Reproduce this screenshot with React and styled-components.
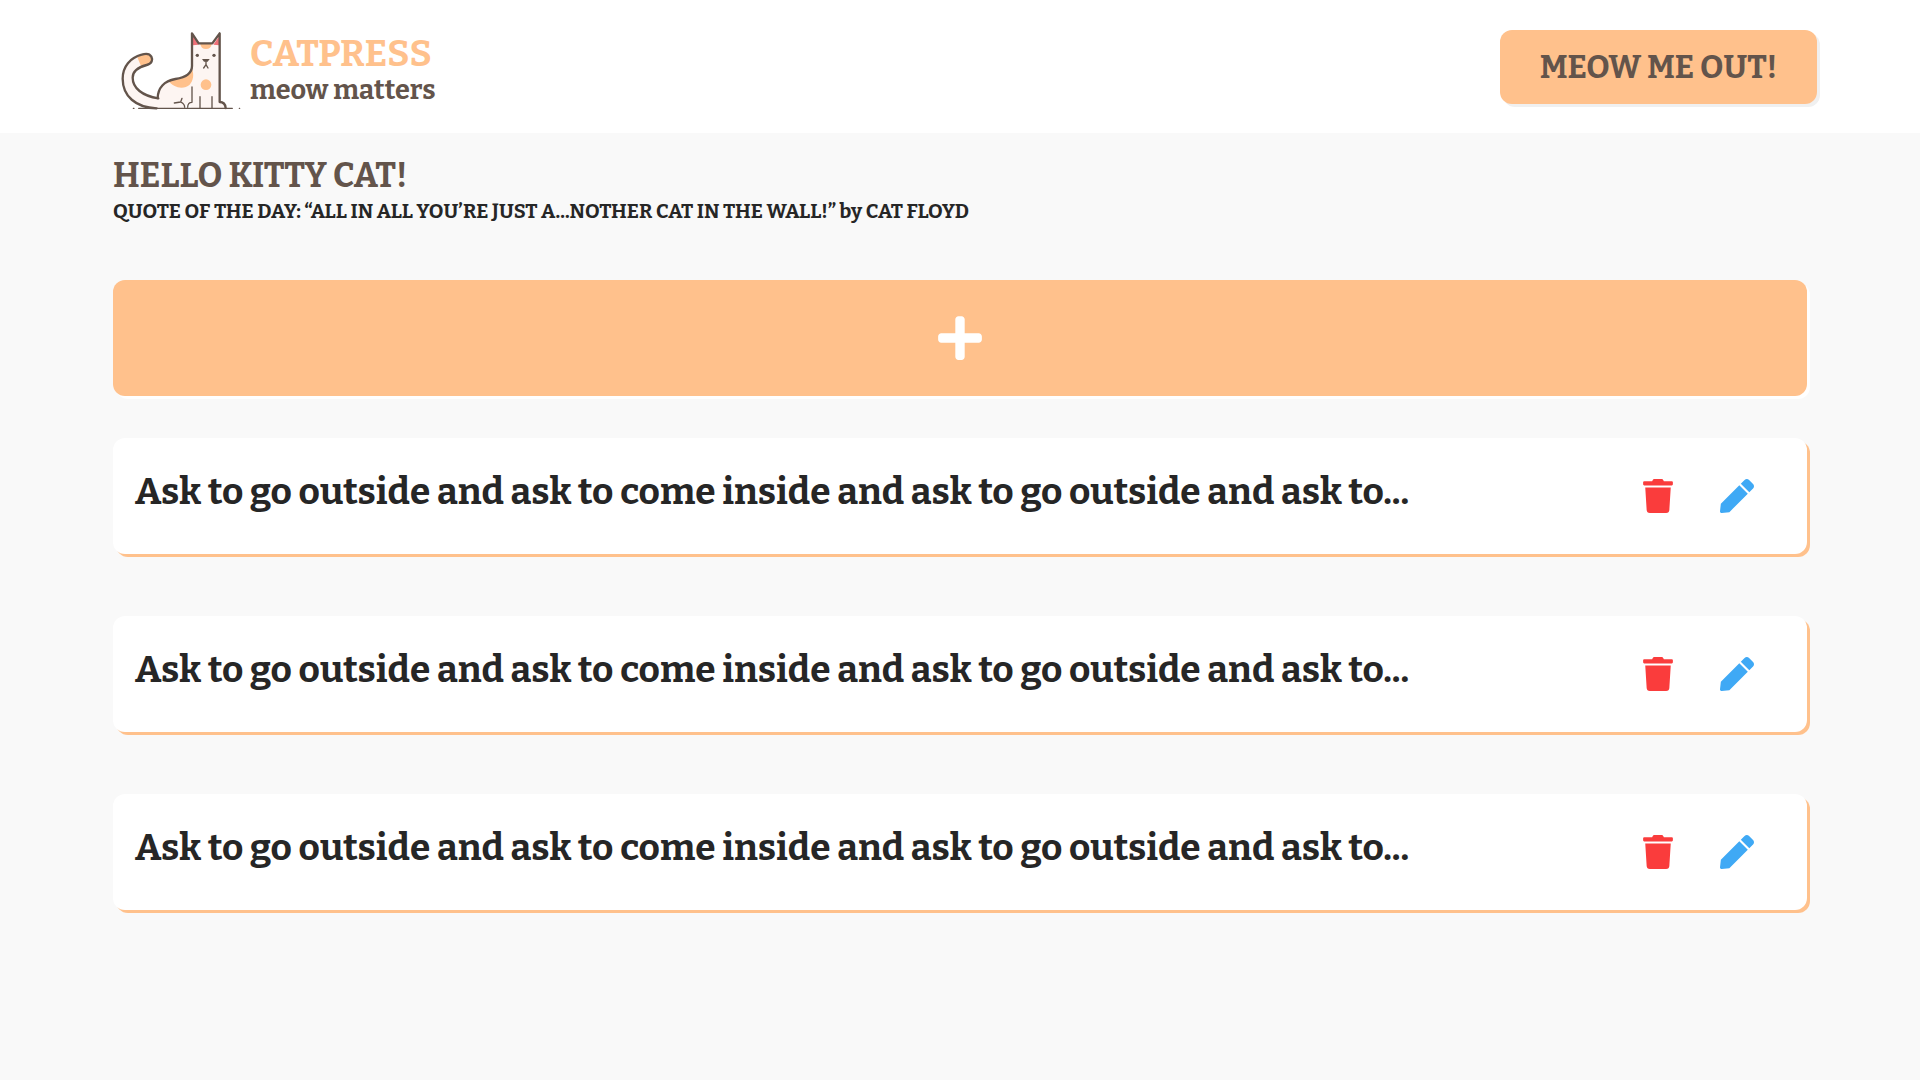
import React from 'react';
import styled, { createGlobalStyle } from 'styled-components';
import { FaPen, FaPlus, FaTrash } from 'react-icons/fa';

const peach = '#ffc18c';
const brown = '#63544b';
const ink = '#262626';

const GlobalStyle = createGlobalStyle`
  * {
    box-sizing: border-box;
    margin: 0;
    padding: 0;
  }

  body {
    background: #f9f9f9;
    color: ${ink};
    font-family: Bitter, 'DejaVu Serif', serif;
    font-weight: 700;
  }

  button {
    border: none;
    font: inherit;
    cursor: pointer;
  }
`;

const Header = styled.header`
  display: flex;
  align-items: center;
  justify-content: space-between;
  padding: 17px 103px 16px 113px;
  background: #fff;
`;

const Brand = styled.a`
  display: flex;
  align-items: center;
  color: ${brown};
  text-decoration: none;
`;

const CatLogo = styled.svg`
  display: block;
  width: 137px;
  height: 100px;
`;

const BrandText = styled.span`
  display: flex;
  flex-direction: column;
  padding-top: 6px;
`;

const BrandName = styled.span`
  color: ${peach};
  font-size: 37px;
  line-height: 40px;
`;

const Slogan = styled.span`
  font-size: 27px;
  line-height: 32px;
`;

const LogoutButton = styled.button`
  padding: 17px 40px;
  border-radius: 12px;
  background: ${peach};
  box-shadow: 3px 3px 0 #f0f0f0;
  color: ${brown};
  font-size: 32px;
  line-height: 40px;
`;

const Main = styled.main`
  padding: 23px 113px 62px;
`;

const Greeting = styled.h1`
  color: ${brown};
  font-size: 34px;
  line-height: 40px;
`;

const Quote = styled.p`
  font-size: 20px;
  line-height: 30px;
`;

const AddButton = styled.button`
  display: flex;
  align-items: center;
  justify-content: center;
  width: 100%;
  height: 116px;
  margin: 54px 0 42px;
  border-radius: 12px;
  background: ${peach};
  box-shadow: 3px 3px 0 #fff;
  color: #fff;
  font-size: 50px;
`;

const PostList = styled.ul`
  display: flex;
  flex-direction: column;
  gap: 62px;
  list-style: none;
`;

const PostCard = styled.li`
  display: flex;
  align-items: center;
  justify-content: space-between;
  height: 116px;
  padding: 0 53px 0 22px;
  border-radius: 12px;
  background: #fff;
  box-shadow: 3px 3px 0 ${peach};
`;

const PostTitle = styled.h2`
  padding-bottom: 8px;
  font-size: 37px;
  line-height: 40px;
`;

const Actions = styled.div`
  display: flex;
  gap: 45px;
`;

const IconButton = styled.button`
  display: flex;
  background: none;
  color: ${(props) => props.$color};
  font-size: 34px;

  svg {
    display: block;
    width: auto;
  }
`;

const posts = [1, 2, 3].map((id) => ({
  id,
  title: 'Ask to go outside and ask to come inside and ask to go outside and ask to...',
}));

function Cat() {
  return (
    <CatLogo viewBox="9 -9 411 300" fill="none" aria-hidden="true">
      <path
        d="M143 235C95 226 68 203 68 173C68 153 83 142 110 135C126 131 129 119 124 110C119 101 108 100 95 104C61 113 38 139 38 176C38 228 77 265 140 265H223L233 250L246 265H346C346 253 340 247 329 246V40L306 70H266L246 40V148C244 168 222 172 199 175C164 179 144 205 143 235Z"
        fill="#fdf5f2"
      />
      <path d="M95 104C108 100 119 101 124 110C129 119 126 131 110 135L94 140L82 112Z" fill={peach} />
      <path d="M174 181C188 174 207 176 222 171C237 166 244 157 247 148C252 165 250 183 239 194C223 209 191 206 174 181Z" fill={peach} />
      <path d="M271 71H305C304 82 298 87 288 87C278 87 272 81 271 71Z" fill={peach} />
      <circle cx="288" cy="194" r="16" fill={peach} />
      <path d="M248 48L266 74L248 76Z" fill="#ef7078" />
      <path d="M328 48V76L310 74Z" fill="#ef7078" />
      <g stroke={brown} strokeLinecap="round" strokeLinejoin="round">
        <path
          d="M145 235C97 228 68 204 68 173C68 153 83 142 110 135C126 131 129 119 124 110C119 101 108 100 95 104C61 113 38 139 38 176C38 228 77 263 140 265"
          strokeWidth="7"
        />
        <path d="M143 234C144 205 162 183 196 177C222 173 246 165 246 138V40L266 70H307L329 40V246C341 246 346 253 347 264" strokeWidth="7" />
        <path d="M86 265H367M70 265H72M388 265H389" strokeWidth="4" />
        <path d="M246 201V247C238 247 233 252 233 262M193 249L212 246L216 235M212 246C221 250 224 254 224 262M270 230V264M306 230V264" strokeWidth="4" />
        <path d="M288 123V134L281 144M288 134L294 144" strokeWidth="4" />
      </g>
      <path d="M276 117H299L293 125H282Z" fill={brown} />
      <circle cx="262" cy="106" r="5" fill={brown} />
      <circle cx="312" cy="106" r="5" fill={brown} />
    </CatLogo>
  );
}

export default function App() {
  return (
    <>
      <GlobalStyle />
      <Header>
        <Brand href="#">
          <Cat />
          <BrandText>
            <BrandName>CATPRESS</BrandName>
            <Slogan>meow matters</Slogan>
          </BrandText>
        </Brand>
        <LogoutButton type="button">MEOW ME OUT!</LogoutButton>
      </Header>
      <Main>
        <Greeting>HELLO KITTY CAT!</Greeting>
        <Quote>QUOTE OF THE DAY: “ALL IN ALL YOU’RE JUST A...NOTHER CAT IN THE WALL!” by CAT FLOYD</Quote>
        <AddButton type="button" aria-label="Add post">
          <FaPlus />
        </AddButton>
        <PostList>
          {posts.map((post) => (
            <PostCard key={post.id}>
              <PostTitle>{post.title}</PostTitle>
              <Actions>
                <IconButton type="button" $color="#fa3c3c" aria-label="Delete post">
                  <FaTrash />
                </IconButton>
                <IconButton type="button" $color="#3fa9f5" aria-label="Edit post">
                  <FaPen />
                </IconButton>
              </Actions>
            </PostCard>
          ))}
        </PostList>
      </Main>
    </>
  );
}
